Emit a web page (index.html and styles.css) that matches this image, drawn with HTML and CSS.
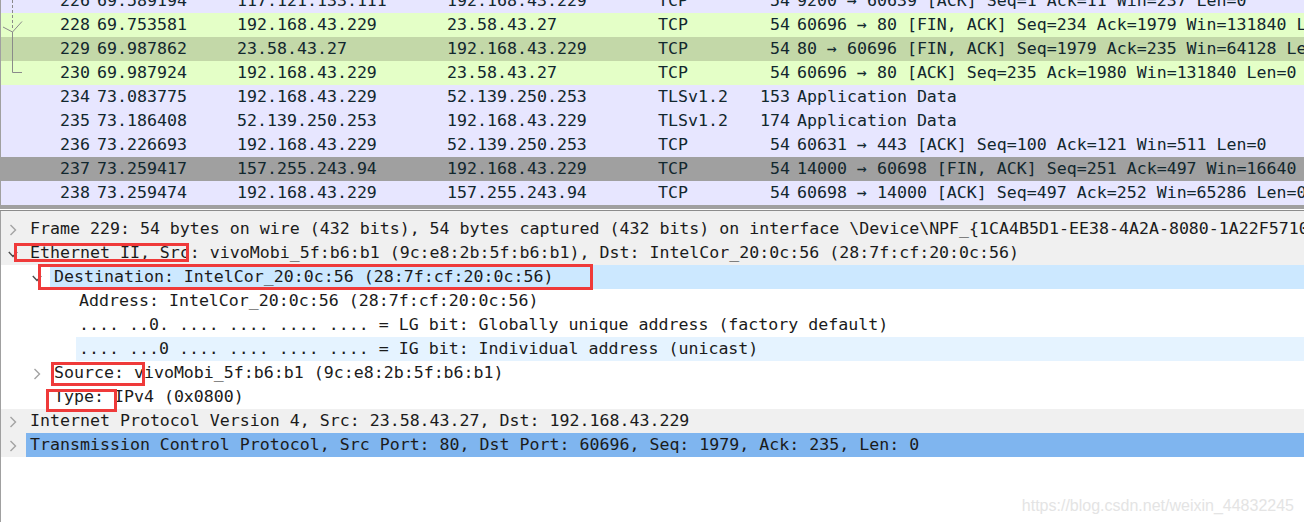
FILE: index.html
```html
<!DOCTYPE html>
<html>
<head>
<meta charset="utf-8">
<link rel="stylesheet" href="styles.css">
</head>
<body>
<div class="app">
  <div class="plist">
    <div class="plist-inner">
      <div class="prow tcp"><span class="c no">226</span><span class="c time">69.589194</span><span class="c src">117.121.133.111</span><span class="c dst">192.168.43.229</span><span class="c proto">TCP</span><span class="c len">54</span><span class="c info">9200 → 60639 [ACK] Seq=1 Ack=11 Win=237 Len=0</span></div>
      <div class="prow http"><span class="c no">228</span><span class="c time">69.753581</span><span class="c src">192.168.43.229</span><span class="c dst">23.58.43.27</span><span class="c proto">TCP</span><span class="c len">54</span><span class="c info">60696 → 80 [FIN, ACK] Seq=234 Ack=1979 Win=131840 Len=0</span></div>
      <div class="prow sel"><span class="c no">229</span><span class="c time">69.987862</span><span class="c src">23.58.43.27</span><span class="c dst">192.168.43.229</span><span class="c proto">TCP</span><span class="c len">54</span><span class="c info">80 → 60696 [FIN, ACK] Seq=1979 Ack=235 Win=64128 Len=0</span></div>
      <div class="prow http"><span class="c no">230</span><span class="c time">69.987924</span><span class="c src">192.168.43.229</span><span class="c dst">23.58.43.27</span><span class="c proto">TCP</span><span class="c len">54</span><span class="c info">60696 → 80 [ACK] Seq=235 Ack=1980 Win=131840 Len=0</span></div>
      <div class="prow tcp"><span class="c no">234</span><span class="c time">73.083775</span><span class="c src">192.168.43.229</span><span class="c dst">52.139.250.253</span><span class="c proto">TLSv1.2</span><span class="c len">153</span><span class="c info">Application Data</span></div>
      <div class="prow tcp"><span class="c no">235</span><span class="c time">73.186408</span><span class="c src">52.139.250.253</span><span class="c dst">192.168.43.229</span><span class="c proto">TLSv1.2</span><span class="c len">174</span><span class="c info">Application Data</span></div>
      <div class="prow tcp"><span class="c no">236</span><span class="c time">73.226693</span><span class="c src">192.168.43.229</span><span class="c dst">52.139.250.253</span><span class="c proto">TCP</span><span class="c len">54</span><span class="c info">60631 → 443 [ACK] Seq=100 Ack=121 Win=511 Len=0</span></div>
      <div class="prow fin"><span class="c no">237</span><span class="c time">73.259417</span><span class="c src">157.255.243.94</span><span class="c dst">192.168.43.229</span><span class="c proto">TCP</span><span class="c len">54</span><span class="c info">14000 → 60698 [FIN, ACK] Seq=251 Ack=497 Win=16640 Len=0</span></div>
      <div class="prow tcp"><span class="c no">238</span><span class="c time">73.259474</span><span class="c src">192.168.43.229</span><span class="c dst">157.255.243.94</span><span class="c proto">TCP</span><span class="c len">54</span><span class="c info">60698 → 14000 [ACK] Seq=497 Ack=252 Win=65286 Len=0</span></div>
    </div>
    <svg class="conv" width="30" height="90" viewBox="0 0 30 90">
      <line x1="12.5" y1="0" x2="12.5" y2="29" stroke="#8a8a8a" stroke-width="1" stroke-dasharray="3 2"/>
      <polyline points="3,27 12.5,32 22,21.5" fill="none" stroke="#8a8a8a" stroke-width="1"/>
      <polyline points="12.5,32 12.5,72.5 22,72.5" fill="none" stroke="#8a8a8a" stroke-width="1"/>
    </svg>
  </div>
  <div class="splitter"></div>
  <div class="details">
    <div class="spacer"></div>
    <div class="drow top">
      <div class="branch l0"><svg class="arr" width="10" height="12" viewBox="0 0 10 12"><polyline points="2.5,1 7.5,6 2.5,11" fill="none" stroke="#a3a3a3" stroke-width="1.4"/></svg></div>
      <div class="label">Frame 229: 54 bytes on wire (432 bits), 54 bytes captured (432 bits) on interface \Device\NPF_{1CA4B5D1-EE38-4A2A-8080-1A22F571022B}, id 0</div>
    </div>
    <div class="drow top">
      <div class="branch l0"><svg class="arr" width="10" height="12" viewBox="0 0 10 12"><polyline points="0.8,4 5,8.5 9.2,4" fill="none" stroke="#4a4a4a" stroke-width="1.4"/></svg></div>
      <div class="label">Ethernet II, Src: vivoMobi_5f:b6:b1 (9c:e8:2b:5f:b6:b1), Dst: IntelCor_20:0c:56 (28:7f:cf:20:0c:56)</div>
    </div>
    <div class="drow">
      <div class="branch l1"><svg class="arr" width="10" height="12" viewBox="0 0 10 12"><polyline points="0.8,4 5,8.5 9.2,4" fill="none" stroke="#4a4a4a" stroke-width="1.4"/></svg></div>
      <div class="label selected">Destination: IntelCor_20:0c:56 (28:7f:cf:20:0c:56)</div>
    </div>
    <div class="drow">
      <div class="branch l2"></div>
      <div class="label">Address: IntelCor_20:0c:56 (28:7f:cf:20:0c:56)</div>
    </div>
    <div class="drow">
      <div class="branch l2"></div>
      <div class="label">.... ..0. .... .... .... .... = LG bit: Globally unique address (factory default)</div>
    </div>
    <div class="drow">
      <div class="branch l2"></div>
      <div class="label hover">.... ...0 .... .... .... .... = IG bit: Individual address (unicast)</div>
    </div>
    <div class="drow">
      <div class="branch l1"><svg class="arr" width="10" height="12" viewBox="0 0 10 12"><polyline points="2.5,1 7.5,6 2.5,11" fill="none" stroke="#a3a3a3" stroke-width="1.4"/></svg></div>
      <div class="label">Source: vivoMobi_5f:b6:b1 (9c:e8:2b:5f:b6:b1)</div>
    </div>
    <div class="drow">
      <div class="branch l1"></div>
      <div class="label">Type: IPv4 (0x0800)</div>
    </div>
    <div class="drow top">
      <div class="branch l0"><svg class="arr" width="10" height="12" viewBox="0 0 10 12"><polyline points="2.5,1 7.5,6 2.5,11" fill="none" stroke="#a3a3a3" stroke-width="1.4"/></svg></div>
      <div class="label">Internet Protocol Version 4, Src: 23.58.43.27, Dst: 192.168.43.229</div>
    </div>
    <div class="drow top">
      <div class="branch l0"><svg class="arr" width="10" height="12" viewBox="0 0 10 12"><polyline points="2.5,1 7.5,6 2.5,11" fill="none" stroke="#a3a3a3" stroke-width="1.4"/></svg></div>
      <div class="label field">Transmission Control Protocol, Src Port: 80, Dst Port: 60696, Seq: 1979, Ack: 235, Len: 0</div>
    </div>
    <div class="mark m1"></div>
    <div class="mark m2"></div>
    <div class="mark m3"></div>
    <div class="mark m4"></div>
  </div>
  <div class="watermark">https://blog.csdn.net/weixin_44832245</div>
</div>
</body>
</html>
```
FILE: styles.css
```css
html, body {
  margin: 0;
  padding: 0;
  background: #ffffff;
}

.app {
  position: relative;
  width: 1304px;
  height: 522px;
  overflow: hidden;
  font-family: "DejaVu Sans Mono", "Liberation Mono", monospace;
  font-size: 16.6px;
}

/* ---------- packet list ---------- */
.plist {
  position: relative;
  height: 205px;
  overflow: hidden;
  border-left: 1px solid #a0a0a0;
  box-sizing: border-box;
}

.plist-inner {
  margin-top: -11px;
}

.prow {
  display: grid;
  grid-template-columns: 89px 147px 210px 211px 92px 40px 1fr;
  height: 24px;
  line-height: 24px;
  color: #12272e;
  white-space: nowrap;
}

.prow.tcp { background: #e7e6ff; }
.prow.http { background: #e4ffc7; }
.prow.sel { background: #c3d8a8; }
.prow.fin { background: #a0a0a0; }

.c {
  overflow: visible;
  white-space: pre;
}

.c.no { text-align: right; }
.c.time { padding-left: 7px; }
.c.len { text-align: right; }
.c.info { padding-left: 7px; overflow: hidden; }

.conv {
  position: absolute;
  left: -1px;
  top: 0;
}

/* ---------- splitter ---------- */
.splitter {
  height: 4px;
  background: #a0a0a0;
  border-bottom: 1px solid #ffffff;
  box-shadow: 0 1px 0 #8c8c8c;
  margin-bottom: 1px;
}

/* ---------- details ---------- */
.details {
  position: relative;
  height: 311px;
  border-left: 1px solid #a0a0a0;
  box-sizing: border-box;
  color: #1b1b1b;
  background: #ffffff;
}

.spacer {
  height: 6px;
  background: #f0f0f0;
}

.drow {
  display: flex;
  height: 24px;
  line-height: 24px;
  white-space: nowrap;
}

.drow.top { background: #f0f0f0; }

.branch {
  flex: none;
  display: flex;
  align-items: center;
  justify-content: flex-end;
  height: 24px;
}

.branch.l0 { width: 25px; }
.branch.l1 { width: 49px; }
.branch.l2 { width: 75px; }

.arr {
  margin-right: 8px;
  margin-top: 2px;
}

.label {
  flex: 1;
  padding-left: 4px;
  overflow: hidden;
  white-space: pre;
}

.branch.l2 + .label { padding-left: 3px; }

.label.selected { background: #cce8ff; }
.label.hover { background: #e5f3ff; }
.label.field { background: #7fb5ef; }

/* ---------- annotation boxes ---------- */
.mark {
  position: absolute;
  box-sizing: border-box;
  border: 3px solid #ef3a3a;
}

.m1 { left: 13px; top: 32px; width: 175px; height: 19px; }
.m2 { left: 37px; top: 53px; width: 555px; height: 26px; }
.m3 { left: 50px; top: 151px; width: 94px; height: 24px; }
.m4 { left: 45px; top: 178px; width: 71px; height: 23px; }

/* ---------- watermark ---------- */
.watermark {
  position: absolute;
  right: 10px;
  bottom: 7px;
  font-family: "Liberation Sans", Arial, sans-serif;
  font-size: 16px;
  color: #e4e4e4;
}
```
